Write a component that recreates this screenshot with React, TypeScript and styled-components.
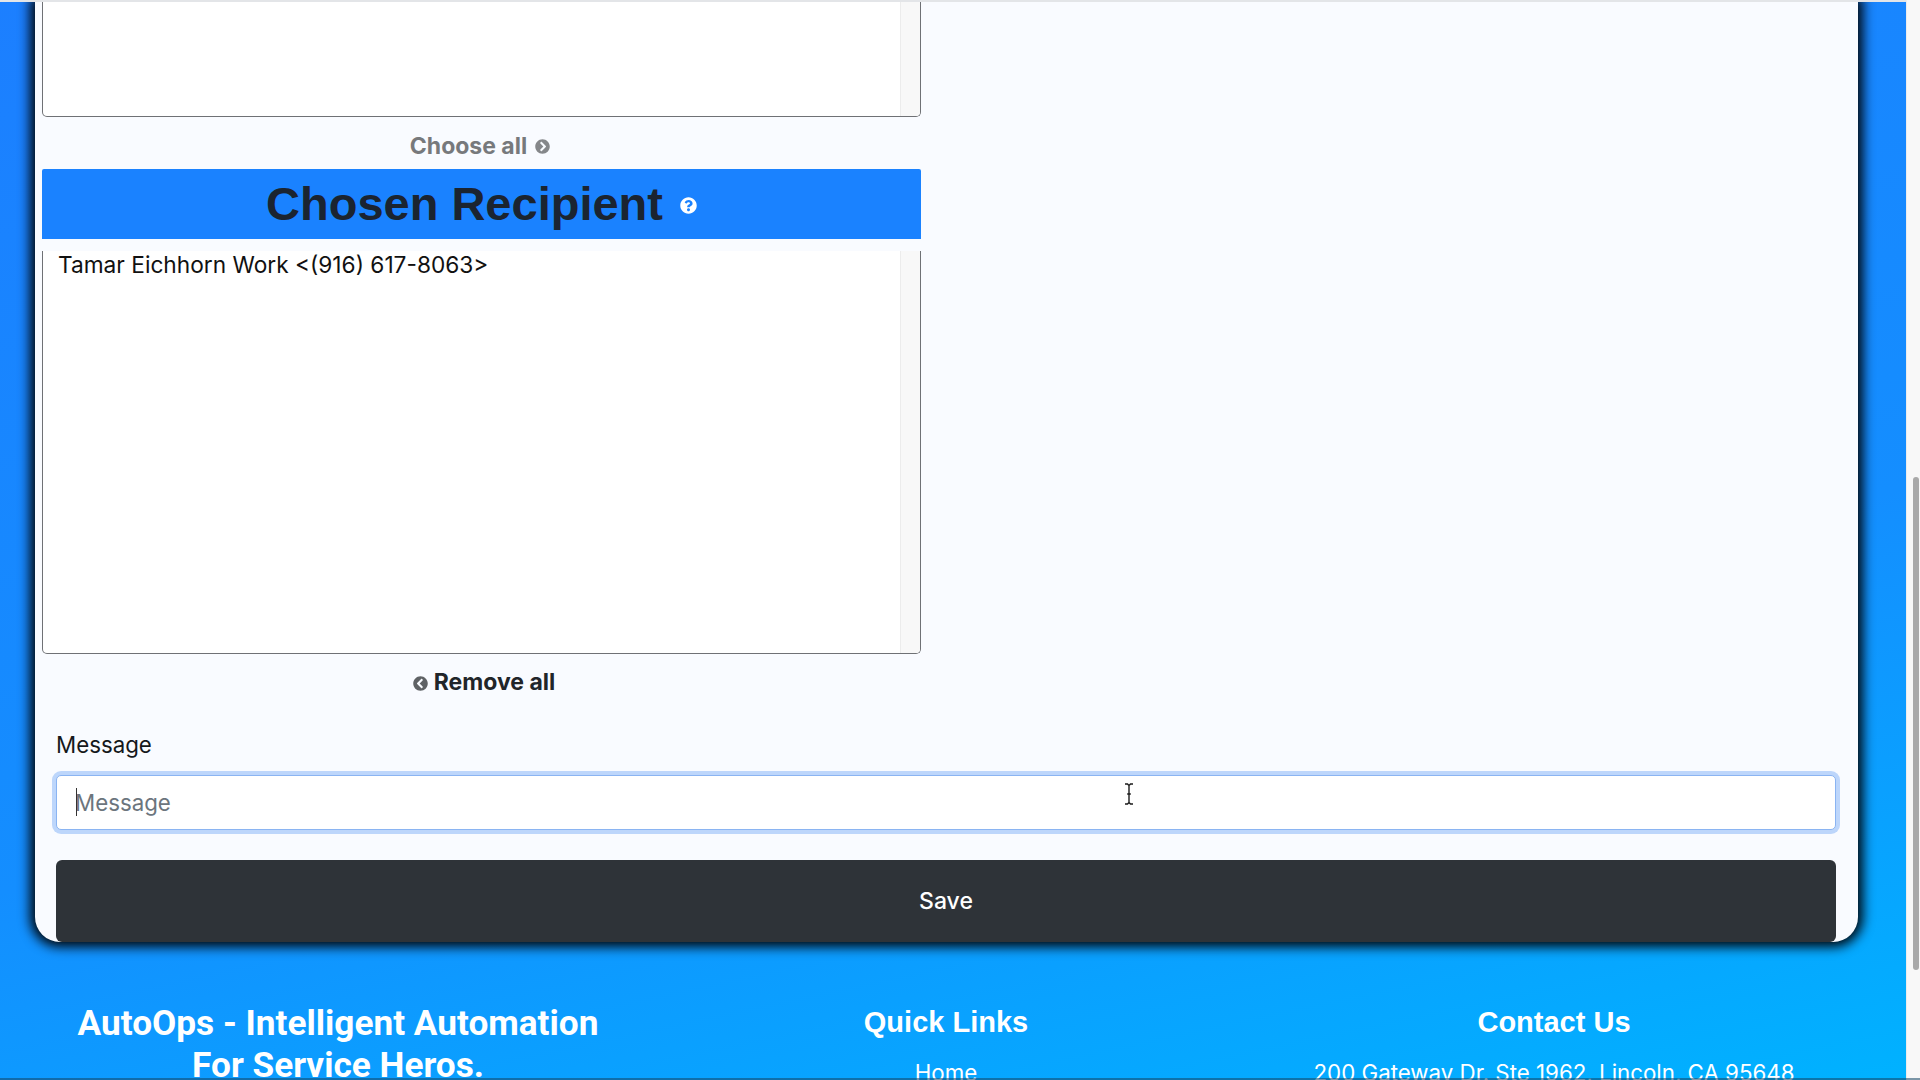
import React from "react";
import styled, { createGlobalStyle } from "styled-components";
import { FaChevronCircleLeft, FaChevronCircleRight, FaQuestionCircle } from "react-icons/fa";

const GlobalStyle = createGlobalStyle`
  html, body {
    margin: 0;
    height: 100%;
    overflow: hidden;
  }
  * {
    box-sizing: border-box;
  }
`;

const App: React.FC = () => {
  return (
    <Page>
      <GlobalStyle />
      <Content>
        <TopRule />
        <Card>
          <Picker>
            <ListBox $height={115}>
              <ListItems />
              <ListTrack />
            </ListBox>
            <ChooseAll>
              Choose all <FaChevronCircleRight />
            </ChooseAll>
            <ChosenHeader>
              <ChosenTitle>Chosen Recipient</ChosenTitle>
              <FaQuestionCircle />
            </ChosenHeader>
            <ListBox $height={403}>
              <ListItems>
                <ListItem>Tamar Eichhorn Work &lt;(916) 617-8063&gt;</ListItem>
              </ListItems>
              <ListTrack />
            </ListBox>
            <RemoveAll>
              <FaChevronCircleLeft /> Remove all
            </RemoveAll>
          </Picker>
          <MessageForm>
            <FieldLabel htmlFor="message">Message</FieldLabel>
            <InputWrap>
              <MessageInput id="message" placeholder="Message" readOnly />
              <Caret />
              <IBeam viewBox="0 0 10 22" fill="none" stroke="#1c1c1c" strokeWidth="1.4">
                <path d="M1 1h2.5L5 2.5 6.5 1H9M5 2.5v17M1 21h2.5L5 19.5 6.5 21H9M3.2 11h3.6" />
              </IBeam>
            </InputWrap>
            <SaveButton type="button">Save</SaveButton>
          </MessageForm>
        </Card>
        <Footer>
          <FooterCol>
            <BrandTitle>
              AutoOps - Intelligent Automation
              <br />
              For Service Heros.
            </BrandTitle>
          </FooterCol>
          <FooterCol>
            <FooterTitle>Quick Links</FooterTitle>
            <FooterText>Home</FooterText>
          </FooterCol>
          <FooterCol>
            <FooterTitle>Contact Us</FooterTitle>
            <FooterText>200 Gateway Dr. Ste 1962, Lincoln, CA 95648</FooterText>
          </FooterCol>
        </Footer>
      </Content>
      <ScrollTrack>
        <ScrollThumb />
      </ScrollTrack>
    </Page>
  );
};

export default App;

const Page = styled.div`
  width: 1920px;
  height: 1080px;
  display: flex;
  overflow: hidden;
  position: relative;
  font-family: "Inter", "Liberation Sans", sans-serif;
  background: linear-gradient(168deg, #1c7fff 0%, #148eff 60%, #00b2ff 100%);
  &::after {
    content: "";
    position: absolute;
    left: 0;
    right: 0;
    bottom: 0;
    height: 2px;
    background: rgba(20, 70, 100, 0.55);
  }
`;

const Content = styled.div`
  width: 1906px;
  display: flex;
  flex-direction: column;
`;

const TopRule = styled.div`
  height: 2px;
  flex: none;
  background: #e3e5e8;
  position: relative;
  z-index: 1;
`;

const Card = styled.div`
  width: 1823px;
  height: 940px;
  flex: none;
  margin-left: 35px;
  padding: 0 22px 0 7px;
  display: flex;
  flex-direction: column;
  background: #f9fbff;
  border-radius: 0 0 25px 25px;
  box-shadow: 0 0 12px 5px #00070e;
`;

const Picker = styled.div`
  width: 879px;
  display: flex;
  flex-direction: column;
`;

const ListBox = styled.div<{ $height: number }>`
  height: ${(p) => p.$height}px;
  display: flex;
  background: #fff;
  border: 1px solid #6f7175;
  border-top: none;
  border-radius: 0 0 5px 5px;
`;

const ListItems = styled.div`
  flex: 1;
  padding: 0 15px;
`;

const ListItem = styled.div`
  font-size: 22.7px;
  line-height: 28px;
  color: #111;
`;

const ListTrack = styled.div`
  width: 20px;
  background: #f8f8f8;
  border-left: 1px solid #ececec;
  border-radius: 0 0 4px 0;
`;

const ChooseAll = styled.div`
  height: 52px;
  padding: 5px 3px 0 0;
  display: flex;
  align-items: center;
  justify-content: center;
  gap: 8px;
  font-size: 23px;
  font-weight: 700;
  color: #77797c;
  svg {
    font-size: 15px;
    color: #85878a;
    margin-top: 2px;
  }
`;

const ChosenHeader = styled.div`
  height: 70px;
  margin-bottom: 12px;
  display: flex;
  align-items: center;
  justify-content: center;
  gap: 17px;
  background: #1a82ff;
  border-radius: 2px 2px 0 0;
  svg {
    font-size: 17px;
    color: #fff;
    margin-top: 3px;
  }
`;

const ChosenTitle = styled.h1`
  margin: 0 0 2px;
  font-family: "Liberation Sans", Arial, sans-serif;
  font-size: 47px;
  font-weight: 700;
  color: #1b2430;
`;

const RemoveAll = styled.div`
  height: 56px;
  display: flex;
  align-items: center;
  justify-content: center;
  gap: 6px;
  font-size: 23px;
  font-weight: 700;
  color: #212529;
  padding-left: 5px;
  svg {
    font-size: 15px;
    color: #5f6265;
    margin-top: 2px;
  }
`;

const MessageForm = styled.div`
  display: flex;
  flex-direction: column;
  padding: 0 0 0 14px;
  margin-top: 20px;
  width: 1794px;
`;

const FieldLabel = styled.label`
  font-size: 22.3px;
  line-height: 30px;
  color: #15181b;
  margin-bottom: 15px;
`;

const InputWrap = styled.div`
  position: relative;
  height: 55px;
  margin-bottom: 30px;
`;

const MessageInput = styled.input`
  width: 100%;
  height: 100%;
  padding: 0 18px;
  font-family: inherit;
  font-size: 22.3px;
  color: #212529;
  background: #fff;
  border: 1px solid #8ab4f2;
  border-radius: 5px;
  outline: none;
  box-shadow: 0 0 0 4px #bdd6fb;
  &::placeholder {
    color: #6c757d;
    opacity: 1;
  }
`;

const Caret = styled.span`
  position: absolute;
  left: 20px;
  top: 13px;
  width: 1px;
  height: 28px;
  background: #333;
`;

const IBeam = styled.svg`
  position: absolute;
  left: 1068px;
  top: 8px;
  width: 10px;
  height: 22px;
`;

const SaveButton = styled.button`
  height: 82px;
  width: 100%;
  border: none;
  border-radius: 6px;
  background: #2e3338;
  color: #fff;
  font-family: inherit;
  font-size: 23px;
  font-weight: 500;
`;

const Footer = styled.div`
  width: 1824px;
  margin-left: 34px;
  padding-top: 60px;
  display: grid;
  grid-template-columns: repeat(3, 1fr);
  color: #fff;
  text-align: center;
`;

const FooterCol = styled.div`
  display: flex;
  flex-direction: column;
`;

const BrandTitle = styled.h2`
  margin: 0;
  font-family: "Roboto", sans-serif;
  font-size: 35.2px;
  line-height: 42px;
  font-weight: 700;
`;

const FooterTitle = styled.h3`
  margin: 0 0 16px;
  font-family: "Liberation Sans", Arial, sans-serif;
  font-size: 29px;
  line-height: 40px;
  font-weight: 700;
`;

const FooterText = styled.div`
  font-size: 22.3px;
  line-height: 30px;
`;

const ScrollTrack = styled.div`
  width: 14px;
  padding-top: 477px;
  padding-left: 6px;
  padding-right: 1px;
  background: #f8f8f8;
  border-left: 1px solid #ececec;
`;

const ScrollThumb = styled.div`
  height: 493px;
  background: #a9a9a9;
  border-radius: 4px;
`;
